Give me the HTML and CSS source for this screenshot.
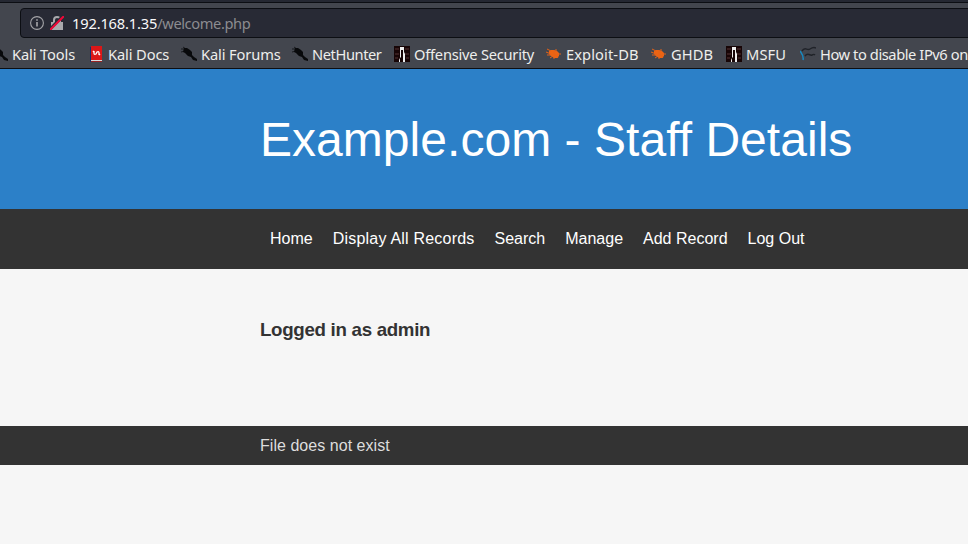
FILE: index.html
```html
<!DOCTYPE html>
<html lang="en">
<head>
<meta charset="utf-8">
<title>Example.com - Staff Details</title>
<link rel="stylesheet" href="styles.css">
</head>
<body>
<svg class="defs" aria-hidden="true">
  <symbol id="dragon" viewBox="0 0 16 16"><path d="M0 3l4 0M2 1l3 2M0 6l4-1" stroke="#191a1e"/><path d="M3 2h3l3 2 2 2 0 3 2 2 3 2v2l-4-1-2-3-3-1-3-3-2-1z" fill="#08090b"/></symbol>
  <symbol id="docs" viewBox="0 0 16 16"><path d="M2 1h2v15H2z" fill="#16306b"/><path d="M3 0h11v14H3z" fill="#dc1717"/><path d="M3 14h11v1H3z" fill="#ddd"/><path d="M3 15h11v1H3z" fill="#922"/><path d="M6 5v2q0 2 2 1l1-2q2-1 2 1v2M5 6l1-1M11 9l1-1" fill="none" stroke="#fff" stroke-width="1.3"/></symbol>
  <symbol id="offsec" viewBox="0 0 16 16"><path d="M0 0h16v16H0z" fill="#170506"/><path d="M1 3h4M11 3h4M1 8h4M11 8h4M1 12h3M12 12h3" stroke="#573535" stroke-width="1.2"/><path d="M6 1h4v5l1 2v8H9V4H7v7l-1 1v4H5v-2l1-2z" fill="#eee"/></symbol>
  <symbol id="bug" viewBox="0 0 16 16"><path d="M3 5l2-1 3 0 3 1 2 2 0 3-2 2-3 0-3-2-2-2z" fill="#ed6412"/><path d="M1 3l4 2M0 6l5 2M1 9l5 0M4 12l3-2M8 13V4M10 3v3M12 12l-3-4M15 8l-4 0" stroke="#e46318" stroke-width="1"/></symbol>
  <symbol id="waves" viewBox="0 0 16 16"><path d="M2 5c3-5 5 0 8-2s4-2 6-1M5 10c3-4 5 0 7-1s2-1 3 0" fill="none" stroke="#202329" stroke-width="1.5"/><path d="M0 5c2 3 4 5 3 9" fill="none" stroke="#168bc4" stroke-width="1.5"/></symbol>
</svg>
<div class="browser">
  <div class="tabs"></div>
  <div class="address">
    <svg class="info" viewBox="0 0 14 14"><circle cx="7" cy="7" r="6.4" fill="none" stroke="#a4a4a8" stroke-width="1.1"/><path d="M7 6v4.5M7 3.3v1.5" stroke="#b0b0b3" stroke-width="1.5"/></svg>
    <svg class="lock" viewBox="0 0 14 14"><path d="M4 7V4a3 3 0 0 1 6 0v3" fill="none" stroke="#a9a9ad" stroke-width="2"/><path d="M1 6h12v8H1z" fill="#a9a9ad"/><path d="M0 13L13 0" stroke="#282a35" stroke-width="3"/><path d="M0 14L14 0" stroke="#ef0838" stroke-width="2"/></svg>
    <span class="url">192.168.1.35<span class="path">/welcome.php</span></span>
  </div>
  <div class="bookmarks">
    <span class="bookmark"><svg><use href="#dragon"/></svg>Kali Tools</span>
    <span class="bookmark"><svg><use href="#docs"/></svg>Kali Docs</span>
    <span class="bookmark"><svg><use href="#dragon"/></svg>Kali Forums</span>
    <span class="bookmark tight"><svg><use href="#dragon"/></svg>NetHunter</span>
    <span class="bookmark snug"><svg><use href="#offsec"/></svg>Offensive Security</span>
    <span class="bookmark loose"><svg><use href="#bug"/></svg>Exploit-DB</span>
    <span class="bookmark loose"><svg><use href="#bug"/></svg>GHDB</span>
    <span class="bookmark loose"><svg><use href="#offsec"/></svg>MSFU</span>
    <span class="bookmark tight"><svg><use href="#waves"/></svg>How to disable IPv6 on</span>
  </div>
</div>
<header><h1>Example.com - Staff Details</h1></header>
<nav><a>Home</a><a class="wide">Display All Records</a><a>Search</a><a>Manage</a><a>Add Record</a><a>Log Out</a></nav>
<main><h3>Logged in as admin</h3></main>
<footer>File does not exist</footer>
</body>
</html>
```
FILE: styles.css
```css
* { box-sizing: border-box; }
body {
  margin: 0;
  height: 544px;
  overflow: hidden;
  background: #f6f6f6;
  color: #333;
  font: 16px/19px "Liberation Sans", Arial, sans-serif;
}
.defs { display: none; }
.browser {
  height: 69px;
  background: #43464e;
  border-bottom: 1px solid #0c0e13;
  font: 14.67px/20px "Noto Sans", sans-serif;
  overflow: hidden;
}
.tabs {
  height: 3px;
  background: #252832;
  border-bottom: 1px solid #0c0e13;
}
.address {
  display: flex;
  align-items: center;
  height: 30px;
  margin: 5px -10px 0 20px;
  padding-left: 9px;
  background: #282a35;
  border: 1px solid #0c0e13;
  border-radius: 4px;
}
.info { width: 14px; height: 14px; margin-right: 6px; }
.lock { width: 14px; height: 14px; margin-right: 8px; }
.url { color: #f9f9fa; letter-spacing: -0.17px; }
.path { color: #8c8c90; letter-spacing: -0.4px; }
.bookmarks {
  display: grid;
  grid-template-columns: 96px 93px 111px 102px 152px 105px 75px 74px 190px;
  margin-left: -8px;
  height: 30px;
  padding-top: 2px;
  align-items: center;
  color: #eeeeec;
}
.bookmark {
  display: flex;
  align-items: center;
  gap: 4px;
  white-space: nowrap;
  letter-spacing: -0.12px;
}
.bookmark.tight { letter-spacing: -0.42px; }
.bookmark.snug { letter-spacing: -0.23px; }
.bookmark.loose { letter-spacing: 0.1px; }
.bookmark svg { width: 16px; height: 16px; flex: none; }
header {
  height: 140px;
  padding: 43px 0 0 260px;
  background: #2c80c8;
  color: #fff;
}
h1 { margin: 0; font-size: 48px; line-height: 56px; font-weight: 400; letter-spacing: 0.04px; white-space: nowrap; }
nav {
  display: flex;
  align-items: center;
  gap: 20px;
  height: 60px;
  padding: 0 0 2px 270px;
  background: #333;
  color: #fff;
}
nav .wide { letter-spacing: 0.21px; }
main { height: 157px; padding: 50px 0 0 260px; }
h3 { margin: 0; font-size: 18.72px; line-height: 22px; letter-spacing: -0.3px; }
footer { height: 39px; padding: 10px 0 0 260px; background: #333; color: #ddd; letter-spacing: 0.04px; }
```
